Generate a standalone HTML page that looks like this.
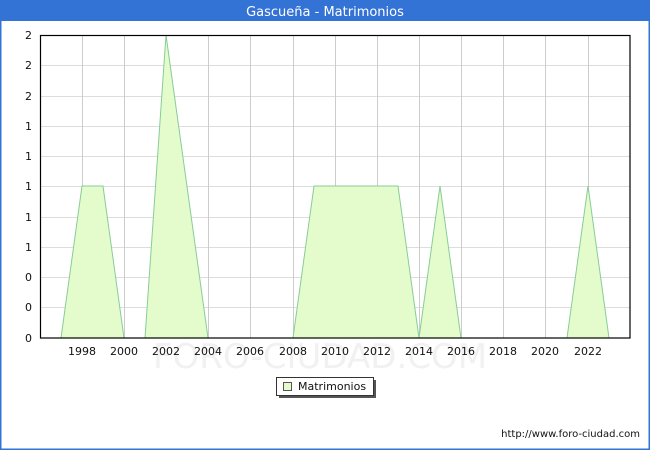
<!DOCTYPE html>
<html><head><style>
body{margin:0;width:650px;height:450px;overflow:hidden;background:#fff;font-family:"DejaVu Sans","Liberation Sans",sans-serif}
</style></head><body>
<svg width="650" height="450" xmlns="http://www.w3.org/2000/svg" font-family="DejaVu Sans, Liberation Sans, sans-serif">
<rect x="0" y="0" width="650" height="450" fill="#fff"/>
<rect x="0.5" y="0.5" width="649" height="449" fill="none" stroke="#3373d6" stroke-width="2"/>
<rect x="0" y="0" width="650" height="21" fill="#3373d6"/>
<text x="325" y="16" text-anchor="middle" fill="#fff" font-size="13">Gascueña - Matrimonios</text>
<g stroke="#ddd" stroke-width="1">
<line x1="40" y1="65.5" x2="630" y2="65.5"/><line x1="40" y1="96.5" x2="630" y2="96.5"/>
<line x1="40" y1="126.5" x2="630" y2="126.5"/><line x1="40" y1="156.5" x2="630" y2="156.5"/>
<line x1="40" y1="186.5" x2="630" y2="186.5"/><line x1="40" y1="217.5" x2="630" y2="217.5"/>
<line x1="40" y1="247.5" x2="630" y2="247.5"/><line x1="40" y1="277.5" x2="630" y2="277.5"/>
<line x1="40" y1="307.5" x2="630" y2="307.5"/>
</g>
<g stroke="#ccc" stroke-width="1">
<line x1="82.5" y1="35" x2="82.5" y2="338"/><line x1="124.5" y1="35" x2="124.5" y2="338"/>
<line x1="166.5" y1="35" x2="166.5" y2="338"/><line x1="208.5" y1="35" x2="208.5" y2="338"/>
<line x1="250.5" y1="35" x2="250.5" y2="338"/><line x1="293.5" y1="35" x2="293.5" y2="338"/>
<line x1="335.5" y1="35" x2="335.5" y2="338"/><line x1="377.5" y1="35" x2="377.5" y2="338"/>
<line x1="419.5" y1="35" x2="419.5" y2="338"/><line x1="461.5" y1="35" x2="461.5" y2="338"/>
<line x1="503.5" y1="35" x2="503.5" y2="338"/><line x1="545.5" y1="35" x2="545.5" y2="338"/>
<line x1="588.5" y1="35" x2="588.5" y2="338"/>
</g>
<text x="320" y="368" text-anchor="middle" font-size="34" fill="#eee" opacity="0.8">FORO-CIUDAD.COM</text>
<polygon fill="#e4fccc" stroke="#88cc99" stroke-width="1" points="61,338 82,186 103,186 124,338 145,338 166,35 208,338 293,338 314,186 398,186 419,338 440,186 461,338 567,338 588,186 609,338"/>
<rect x="40.5" y="35.5" width="589.5" height="302.5" fill="none" stroke="#000" stroke-width="1.2"/>
<g font-size="11" fill="#111" text-anchor="end">
<text x="32" y="39">2</text><text x="32" y="69">2</text><text x="32" y="100">2</text>
<text x="32" y="130">1</text><text x="32" y="160">1</text><text x="32" y="190">1</text>
<text x="32" y="221">1</text><text x="32" y="251">1</text><text x="32" y="281">0</text>
<text x="32" y="311">0</text><text x="32" y="342">0</text>
</g>
<g font-size="11" fill="#111" text-anchor="middle">
<text x="82" y="355">1998</text><text x="124" y="355">2000</text><text x="166" y="355">2002</text>
<text x="208" y="355">2004</text><text x="250" y="355">2006</text><text x="293" y="355">2008</text>
<text x="335" y="355">2010</text><text x="377" y="355">2012</text><text x="419" y="355">2014</text>
<text x="461" y="355">2016</text><text x="503" y="355">2018</text><text x="545" y="355">2020</text>
<text x="588" y="355">2022</text>
</g>
<rect x="279" y="380" width="97" height="18" fill="#555"/>
<rect x="276.5" y="377.5" width="97" height="18" fill="#fff" stroke="#333"/>
<rect x="283.5" y="382.5" width="8" height="8" fill="#e4fccc" stroke="#555"/>
<text x="298" y="390" font-size="11" fill="#111">Matrimonios</text>
<text x="640" y="437" font-size="10" fill="#111" text-anchor="end">http://www.foro-ciudad.com</text>
</svg>
</body></html>
